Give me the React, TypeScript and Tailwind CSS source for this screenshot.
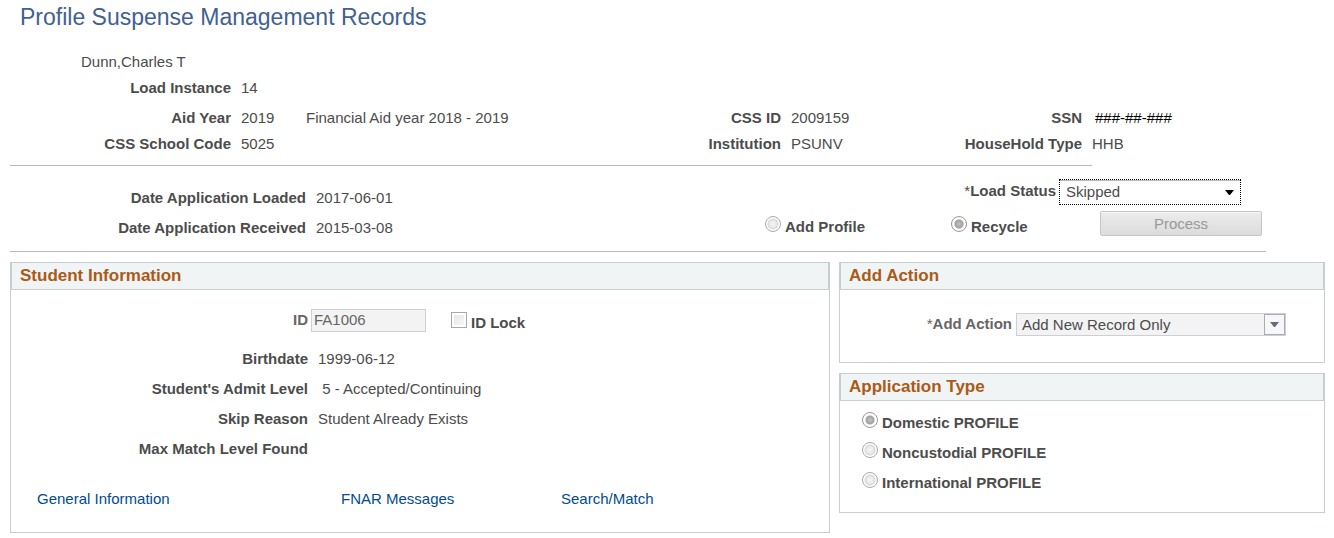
import { ReactNode } from 'react'

type FieldProps = {
  label: string
  children?: ReactNode
}

type OptionProps = {
  id: string
  label: string
  name?: string
  type?: 'radio' | 'checkbox'
  checked?: boolean
}

const applicationTypes = [
  { id: 'domestic', label: 'Domestic PROFILE', checked: true },
  { id: 'noncustodial', label: 'Noncustodial PROFILE', checked: false },
  { id: 'international', label: 'International PROFILE', checked: false },
]

const Field = ({ label, children }: FieldProps) => {
  return (
    <>
      <dt className="text-right font-bold">{label}</dt>
      <dd className="whitespace-pre">{children}</dd>
    </>
  )
}

const Option = ({ id, label, name, type = 'radio', checked = false }: OptionProps) => {
  const shape =
    type === 'radio'
      ? 'rounded-full bg-[radial-gradient(circle,#f4f4f4_0,#ececec_3px,#d8d8d8_5px,#ffffff_6px)] checked:border-[#989898] checked:bg-[radial-gradient(circle,#c4c4c4_0,#a8a8a8_3px,#a0a0a0_4px,#ffffff_5px)]'
      : 'bg-[linear-gradient(135deg,#e6e6e6,#f8f8f8)] shadow-[inset_0_0_0_2px_#ffffff]'

  return (
    <div className="flex items-start gap-1">
      <input
        className={`size-4 shrink-0 appearance-none border border-[#a8a8a8] ${shape}`}
        type={type}
        id={id}
        name={name}
        defaultChecked={checked}
        disabled
      />
      <label className="font-bold leading-[21px]" htmlFor={id}>
        {label}
      </label>
    </div>
  )
}

const Panel = ({ title, children }: { title: string; children: ReactNode }) => {
  return (
    <section className="border border-[#c8ccd3]">
      <h2 className="border-x border-b border-[#c8ccd3] bg-[#f0f4f5] pl-2 text-[17px] font-bold leading-[26px] text-[#ab5a17]">
        {title}
      </h2>
      {children}
    </section>
  )
}

const Arrow = ({ className }: { className?: string }) => {
  return (
    <svg className={className} width="9" height="5" viewBox="0 0 9 5" fill="currentColor">
      <path d="M0 0h9L5 5H4z" />
    </svg>
  )
}

const App = () => {
  return (
    <main className="bg-white pl-[10px] pr-[9px] font-['Liberation_Sans',Arial,sans-serif] text-[15px] leading-[26px] text-[#4c4c4c]">
      <h1 className="pl-[10px] text-[23px] leading-[34px] text-[#426092]">
        Profile Suspense Management Records
      </h1>

      <div className="pl-[71px] pt-[15px]">Dunn,Charles T</div>
      <dl className="grid grid-cols-[221px_1fr] gap-x-[10px]">
        <Field label="Load Instance">14</Field>
      </dl>
      <dl className="grid grid-cols-[221px_55px_1fr_100px_154px_127px_233px] gap-x-[10px] pb-2 pt-1">
        <Field label="Aid Year">2019</Field>
        <dd>Financial Aid year 2018 - 2019</dd>
        <Field label="CSS ID">2009159</Field>
        <Field label="SSN">
          <span className="pl-[3px] text-black">###-##-###</span>
        </Field>
        <Field label="CSS School Code">5025</Field>
        <dd />
        <Field label="Institution">PSUNV</Field>
        <Field label="HouseHold Type">HHB</Field>
      </dl>
      <hr className="mr-[233px] border-[#b9b9b9]" />

      <div className="flex justify-between pb-2 pr-[63px] pt-[13px]">
        <dl className="grid grid-cols-[296px_auto] gap-x-[10px] pt-1 leading-[30px]">
          <Field label="Date Application Loaded">2017-06-01</Field>
          <Field label="Date Application Received">2015-03-08</Field>
        </dl>
        <div className="flex flex-col gap-[6px]">
          <div className="flex justify-end gap-[3px] pr-[21px]">
            <label className="font-bold leading-6" htmlFor="loadStatus">
              <span className="font-normal">*</span>Load Status
            </label>
            <div className="relative">
              <select
                className="block h-[26px] w-[182px] appearance-none border border-dotted border-black bg-white pl-[6px] leading-6 shadow-[inset_0_1px_0_#b9b9b9] outline-none"
                id="loadStatus"
              >
                <option>Skipped</option>
                <option>Add New</option>
              </select>
              <Arrow className="pointer-events-none absolute right-[7px] top-[11px] text-black" />
            </div>
          </div>
          <div className="flex">
            <div className="w-[186px] pt-[5px]">
              <Option id="addProfile" name="loadAction" label="Add Profile" />
            </div>
            <div className="w-[149px] pt-[5px]">
              <Option id="recycle" name="loadAction" label="Recycle" checked />
            </div>
            <button
              className="h-[25px] w-[162px] rounded-xs border border-[#c6c6c6] bg-linear-to-b from-[#ececec] to-[#dcdcdc] leading-[23px] text-[#999999] shadow-[inset_0_1px_0_#f8f8f2]"
              type="button"
              disabled
            >
              Process
            </button>
          </div>
        </div>
      </div>
      <hr className="mr-[59px] border-[#b9b9b9]" />

      <div className="grid grid-cols-[820fr_486fr] gap-[9px] pt-[10px]">
        <Panel title="Student Information">
          <div className="pb-[18px] pt-[15px] leading-[30px]">
            <div className="flex items-center">
              <label className="w-[297px] text-right font-bold text-[#666666]" htmlFor="studentId">
                ID
              </label>
              <input
                className="ml-[3px] mr-[25px] h-[23px] w-[115px] border border-[#ccd0d6] bg-[#f3f3f3] px-[2px] text-[#666666]"
                id="studentId"
                defaultValue="FA1006"
                disabled
              />
              <div className="pt-1">
                <Option id="idLock" type="checkbox" label="ID Lock" />
              </div>
            </div>
            <dl className="grid grid-cols-[297px_1fr] gap-x-[10px] pt-[9px]">
              <Field label="Birthdate">1999-06-12</Field>
              <Field label="Student's Admit Level">{' 5 - Accepted/Continuing'}</Field>
              <Field label="Skip Reason">Student Already Exists</Field>
              <Field label="Max Match Level Found" />
            </dl>
            <nav className="grid grid-cols-[304px_220px_1fr] pl-[26px] pt-5 text-[#004b91]">
              <a href="#general">General Information</a>
              <a href="#fnar">FNAR Messages</a>
              <a href="#search">Search/Match</a>
            </nav>
          </div>
        </Panel>

        <div className="flex flex-col gap-[10px]">
          <Panel title="Add Action">
            <div className="flex gap-1 pb-[26px] pt-[23px]">
              <label
                className="w-[172px] text-right font-bold leading-[22px] text-[#666666]"
                htmlFor="addAction"
              >
                <span className="font-normal">*</span>Add Action
              </label>
              <div className="relative">
                <select
                  className="block h-[23px] w-[270px] appearance-none border border-[#ccd0d6] bg-[#f3f3f3] pl-[5px] leading-[21px] opacity-100"
                  id="addAction"
                  disabled
                >
                  <option>Add New Record Only</option>
                </select>
                <span className="pointer-events-none absolute right-px top-px flex size-[21px] items-center justify-center border border-[#a9adb3] bg-[#f7f7f7] text-[#66667c]">
                  <Arrow />
                </span>
              </div>
            </div>
          </Panel>
          <Panel title="Application Type">
            <div className="flex flex-col gap-[9px] pb-[19px] pl-[22px] pt-[11px]">
              {applicationTypes.map((item) => {
                return (
                  <Option
                    key={item.id}
                    id={item.id}
                    name="applicationType"
                    label={item.label}
                    checked={item.checked}
                  />
                )
              })}
            </div>
          </Panel>
        </div>
      </div>
    </main>
  )
}

export default App
